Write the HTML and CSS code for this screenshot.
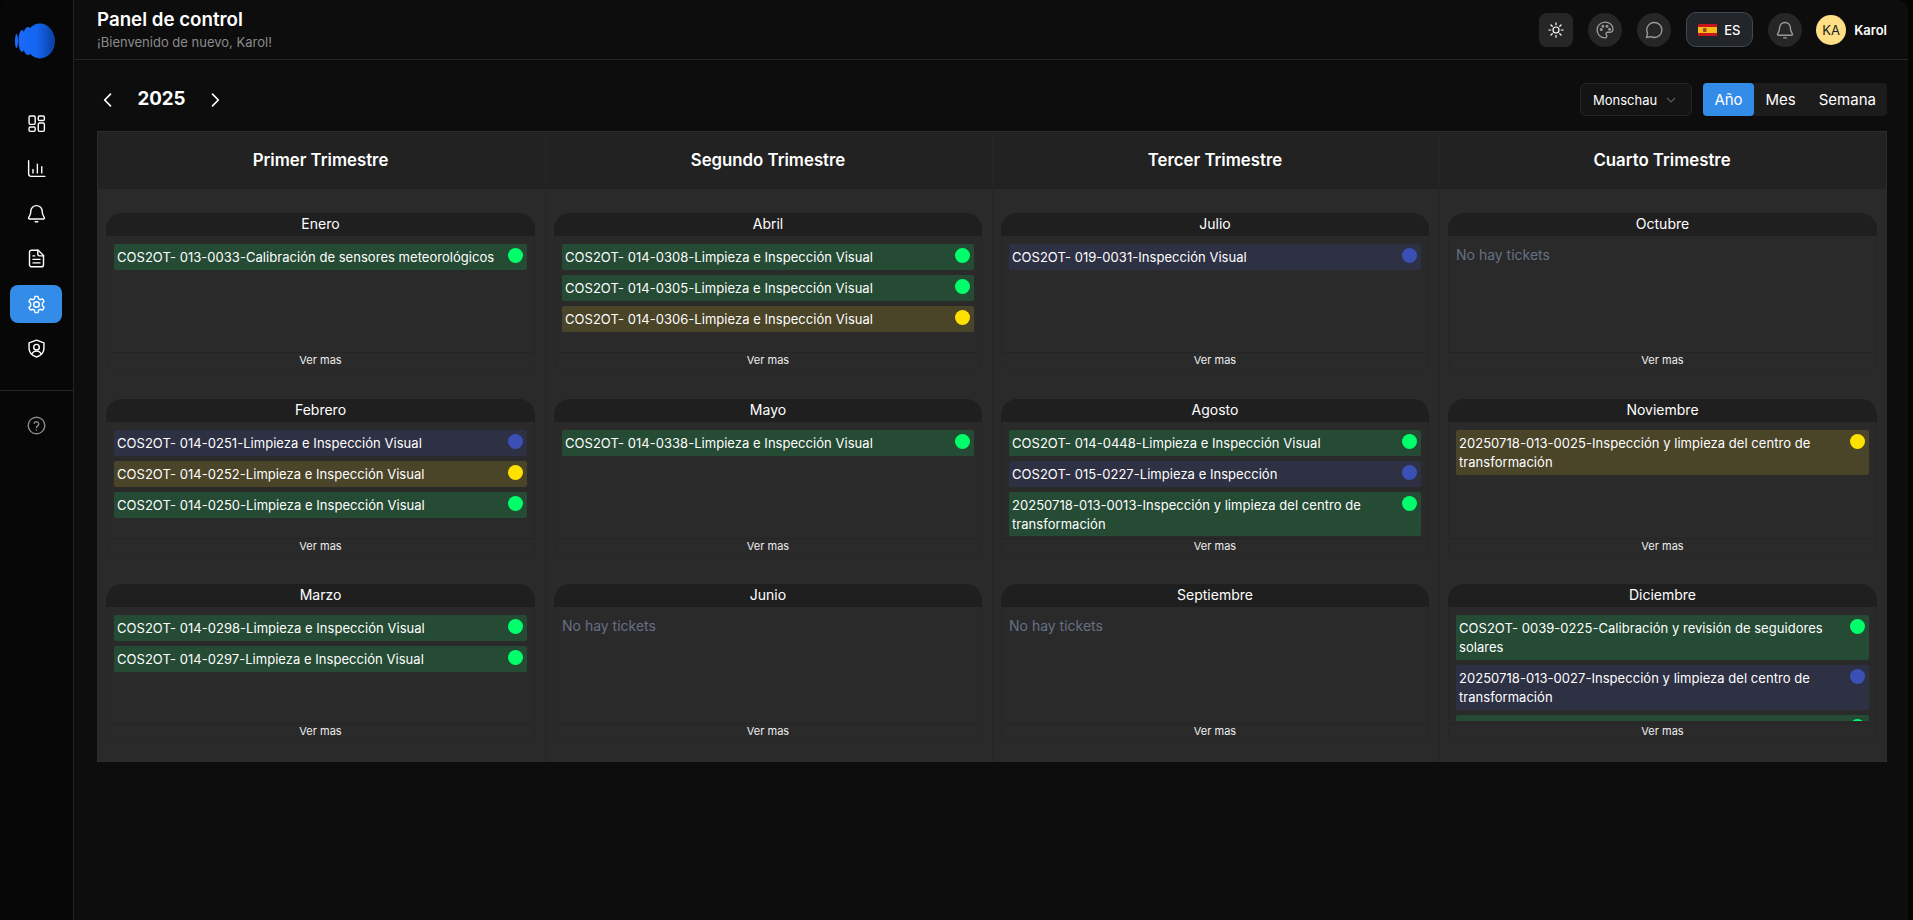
FILE: index.html
```html
<!DOCTYPE html>
<html lang="es">

<head>
    <meta charset="UTF-8">
    <meta name="viewport" content="width=device-width, initial-scale=1.0">
    <title>Panel de control</title>
    <link rel="stylesheet" href="styles.css">
</head>

<body>
    <div class="app">
        <!-- Sidebar -->
        <aside class="sidebar">
            <div class="logo">
                <svg width="41" height="36" viewBox="0 0 41 36">
                    <defs>
                        <linearGradient id="logoFill" gradientUnits="userSpaceOnUse" x1="0" x2="40" y1="0" y2="0">
                            <stop offset="0" stop-color="#1a6bff" />
                            <stop offset="0.55" stop-color="#1565f0" />
                            <stop offset="1" stop-color="#0b3f9e" />
                        </linearGradient>
                    </defs>
                    <ellipse cx="1.5" cy="18" rx="1.5" ry="7" fill="url(#logoFill)" />
                    <ellipse cx="7" cy="18" rx="3.5" ry="11" fill="url(#logoFill)" />
                    <ellipse cx="13" cy="18" rx="5.5" ry="14" fill="url(#logoFill)" />
                    <ellipse cx="25" cy="18" rx="15" ry="17.5" fill="url(#logoFill)" />
                </svg>
            </div>
            <nav class="nav">
                <a href="#" class="nav-item">
                    <svg class="icon" viewBox="0 0 24 24"><rect x="3.5" y="3.5" width="7" height="9.5" rx="1.5" /><rect x="14" y="3.5" width="7" height="5" rx="1.5" /><rect x="3.5" y="16" width="7" height="5" rx="1.5" /><rect x="14" y="11.5" width="7" height="9.5" rx="1.5" /></svg>
                </a>
                <a href="#" class="nav-item">
                    <svg class="icon" viewBox="0 0 24 24"><path d="M3 3v15a3 3 0 0 0 3 3h15.5" /><path d="M8 17v-4M13 17V7M18 17v-7" /></svg>
                </a>
                <a href="#" class="nav-item">
                    <svg class="icon" viewBox="0 0 24 24"><path d="M12 3a6.5 6.5 0 0 0-6.5 6.5c0 4.5-2 6-2.5 7.5-.2.7.3 1.3 1 1.3h16c.7 0 1.2-.6 1-1.3-.5-1.500-2.500-3-2.500-7.500A6.500 6.500 0 0 0 12 3z" /><path d="M10.500 21.500h3" /></svg>
                </a>
                <a href="#" class="nav-item">
                    <svg class="icon" viewBox="0 0 24 24"><path d="M6 2.5h8l6 6V19a2.5 2.5 0 0 1-2.5 2.5h-11A2.5 2.5 0 0 1 4 19V4.5a2 2 0 0 1 2-2z" /><path d="M13.5 2.5V7a2 2 0 0 0 2 2H20" /><path d="M8 9h2M8 13h8M8 17h8" /></svg>
                </a>
                <a href="#" class="nav-item active">
                    <svg class="icon" viewBox="0 0 24 24"><circle cx="12" cy="12" r="3.2" /><path d="M10.3 2.7h3.4l.7 2.8 1.8 1 2.8-.8 1.7 3-2 2v2.600l2 2-1.700 3-2.800-.8-1.800 1-.7 2.800h-3.400l-.7-2.800-1.800-1-2.800.8-1.700-3 2-2v-2.600l-2-2 1.700-3 2.800.8 1.800-1z" /></svg>
                </a>
                <a href="#" class="nav-item">
                    <svg class="icon" viewBox="0 0 24 24"><path d="M12 2.5l8.5 3V12c0 5-3.500 8-8.500 9.700C7 20 3.500 17 3.500 12V5.500z" /><circle cx="12" cy="10.500" r="3.2" /><path d="M6.800 18c1-2 3-3 5.200-3s4.200 1 5.200 3" /></svg>
                </a>
            </nav>
            <div class="sidebar-bottom">
                <a href="#" class="nav-item muted">
                    <svg class="icon" viewBox="0 0 24 24"><circle cx="12" cy="12" r="9.5" /><path d="M9.3 9.5a2.800 2.800 0 0 1 5.400.8c0 1.900-2.700 2.300-2.700 4" /><path d="M12 17.200v.1" /></svg>
                </a>
            </div>
        </aside>

        <main class="main">
            <!-- Top bar -->
            <header class="topbar">
                <div>
                    <h1 class="page-title">Panel de control</h1>
                    <p class="page-subtitle">¡Bienvenido de nuevo, Karol!</p>
                </div>
                <div class="top-actions">
                    <button class="top-btn square">
                        <svg class="icon-sun" viewBox="0 0 24 24"><circle cx="12" cy="12" r="4" /><path d="M12 2.5V5M12 19v2.500M2.500 12H5M19 12h2.500M5.300 5.300L7 7M17 17l1.700 1.700M5.300 18.700L7 17M17 7l1.700-1.700" /></svg>
                    </button>
                    <button class="top-btn">
                        <svg class="icon-sm" viewBox="0 0 24 24"><path d="M12 2.5a9.5 9.5 0 0 0 0 19c1.500 0 2.200-1 2.200-2 0-1.400-1-1.800-1-3 0-1 .8-1.800 2-1.800h2.300c2.300 0 4-1.700 4-4C21.500 6 17.300 2.500 12 2.500z" /><circle cx="7.5" cy="11.5" r="1" /><circle cx="9.5" cy="7.5" r="1" /><circle cx="14.5" cy="7.5" r="1" /><circle cx="17.5" cy="11" r="1" /></svg>
                    </button>
                    <button class="top-btn">
                        <svg class="icon-sm" viewBox="0 0 24 24"><path d="M12.5 3a9 9 0 0 1 0 18c-1.500 0-3-.4-4.200-1L3 21l1.300-5A9 9 0 0 1 12.500 3z" /></svg>
                    </button>
                    <button class="lang-btn">
                        <svg class="flag" viewBox="0 0 19 12"><rect width="19" height="12" fill="#c8161e" /><rect y="3" width="19" height="6" fill="#f6bd18" /><rect x="5" y="4" width="3.5" height="4" rx="1" fill="#9c4a1c" /></svg>
                        <span>ES</span>
                    </button>
                    <button class="top-btn">
                        <svg class="icon-sm" viewBox="0 0 24 24"><path d="M12 3a6.5 6.5 0 0 0-6.5 6.5c0 4.500-2 6-2.500 7.500-.2.7.3 1.300 1 1.300h16c.7 0 1.200-.6 1-1.300-.5-1.500-2.500-3-2.500-7.500A6.500 6.500 0 0 0 12 3z" /><path d="M10.500 21.500h3" /></svg>
                    </button>
                    <div class="user">
                        <span class="avatar">KA</span>
                        <span class="user-name">Karol</span>
                    </div>
                </div>
            </header>

            <div class="content">
                <!-- Year and view controls -->
                <div class="toolbar">
                    <div class="year-nav">
                        <svg class="chevron" viewBox="0 0 24 24"><path d="M15 5l-7 7 7 7" /></svg>
                        <span class="year">2025</span>
                        <svg class="chevron" viewBox="0 0 24 24"><path d="M9 5l7 7-7 7" /></svg>
                    </div>
                    <div class="view-controls">
                        <div class="select">
                            <span>Monschau</span>
                            <svg class="select-arrow" viewBox="0 0 12 12"><path d="M2 4l4 4 4-4" /></svg>
                        </div>
                        <div class="segments">
                            <button class="segment active">Año</button>
                            <button class="segment">Mes</button>
                            <button class="segment">Semana</button>
                        </div>
                    </div>
                </div>

                <!-- Calendar -->
                <div class="calendar">
                    <div class="quarter">
                        <h2 class="quarter-title">Primer Trimestre</h2>
                        <div class="months">
                            <section class="month">
                                <h3 class="month-title">Enero</h3>
                                <div class="tickets">
                                    <div class="ticket green"><span>COS2OT- 013-0033-Calibración de sensores meteorológicos</span><i class="dot"></i></div>
                                </div>
                                <a href="#" class="more">Ver mas</a>
                            </section>
                            <section class="month">
                                <h3 class="month-title">Febrero</h3>
                                <div class="tickets">
                                    <div class="ticket blue"><span>COS2OT- 014-0251-Limpieza e Inspección Visual</span><i class="dot"></i></div>
                                    <div class="ticket yellow"><span>COS2OT- 014-0252-Limpieza e Inspección Visual</span><i class="dot"></i></div>
                                    <div class="ticket green"><span>COS2OT- 014-0250-Limpieza e Inspección Visual</span><i class="dot"></i></div>
                                </div>
                                <a href="#" class="more">Ver mas</a>
                            </section>
                            <section class="month">
                                <h3 class="month-title">Marzo</h3>
                                <div class="tickets">
                                    <div class="ticket green"><span>COS2OT- 014-0298-Limpieza e Inspección Visual</span><i class="dot"></i></div>
                                    <div class="ticket green"><span>COS2OT- 014-0297-Limpieza e Inspección Visual</span><i class="dot"></i></div>
                                </div>
                                <a href="#" class="more">Ver mas</a>
                            </section>
                        </div>
                    </div>

                    <div class="quarter">
                        <h2 class="quarter-title">Segundo Trimestre</h2>
                        <div class="months">
                            <section class="month">
                                <h3 class="month-title">Abril</h3>
                                <div class="tickets">
                                    <div class="ticket green"><span>COS2OT- 014-0308-Limpieza e Inspección Visual</span><i class="dot"></i></div>
                                    <div class="ticket green"><span>COS2OT- 014-0305-Limpieza e Inspección Visual</span><i class="dot"></i></div>
                                    <div class="ticket yellow"><span>COS2OT- 014-0306-Limpieza e Inspección Visual</span><i class="dot"></i></div>
                                </div>
                                <a href="#" class="more">Ver mas</a>
                            </section>
                            <section class="month">
                                <h3 class="month-title">Mayo</h3>
                                <div class="tickets">
                                    <div class="ticket green"><span>COS2OT- 014-0338-Limpieza e Inspección Visual</span><i class="dot"></i></div>
                                </div>
                                <a href="#" class="more">Ver mas</a>
                            </section>
                            <section class="month">
                                <h3 class="month-title">Junio</h3>
                                <div class="tickets">
                                    <p class="empty">No hay tickets</p>
                                </div>
                                <a href="#" class="more">Ver mas</a>
                            </section>
                        </div>
                    </div>

                    <div class="quarter">
                        <h2 class="quarter-title">Tercer Trimestre</h2>
                        <div class="months">
                            <section class="month">
                                <h3 class="month-title">Julio</h3>
                                <div class="tickets">
                                    <div class="ticket blue"><span>COS2OT- 019-0031-Inspección Visual</span><i class="dot"></i></div>
                                </div>
                                <a href="#" class="more">Ver mas</a>
                            </section>
                            <section class="month">
                                <h3 class="month-title">Agosto</h3>
                                <div class="tickets">
                                    <div class="ticket green"><span>COS2OT- 014-0448-Limpieza e Inspección Visual</span><i class="dot"></i></div>
                                    <div class="ticket blue"><span>COS2OT- 015-0227-Limpieza e Inspección</span><i class="dot"></i></div>
                                    <div class="ticket green"><span>20250718-013-0013-Inspección y limpieza del centro de transformación</span><i class="dot"></i></div>
                                </div>
                                <a href="#" class="more">Ver mas</a>
                            </section>
                            <section class="month">
                                <h3 class="month-title">Septiembre</h3>
                                <div class="tickets">
                                    <p class="empty">No hay tickets</p>
                                </div>
                                <a href="#" class="more">Ver mas</a>
                            </section>
                        </div>
                    </div>

                    <div class="quarter">
                        <h2 class="quarter-title">Cuarto Trimestre</h2>
                        <div class="months">
                            <section class="month">
                                <h3 class="month-title">Octubre</h3>
                                <div class="tickets">
                                    <p class="empty">No hay tickets</p>
                                </div>
                                <a href="#" class="more">Ver mas</a>
                            </section>
                            <section class="month">
                                <h3 class="month-title">Noviembre</h3>
                                <div class="tickets">
                                    <div class="ticket yellow"><span>20250718-013-0025-Inspección y limpieza del centro de transformación</span><i class="dot"></i></div>
                                </div>
                                <a href="#" class="more">Ver mas</a>
                            </section>
                            <section class="month">
                                <h3 class="month-title">Diciembre</h3>
                                <div class="tickets">
                                    <div class="ticket green"><span>COS2OT- 0039-0225-Calibración y revisión de seguidores solares</span><i class="dot"></i></div>
                                    <div class="ticket blue"><span>20250718-013-0027-Inspección y limpieza del centro de transformación</span><i class="dot"></i></div>
                                    <!-- Cut off by the scroll area -->
                                    <div class="ticket green clipped"><i class="dot"></i></div>
                                </div>
                                <a href="#" class="more">Ver mas</a>
                            </section>
                        </div>
                    </div>
                </div>
            </div>
        </main>
    </div>
</body>

</html>
```

FILE: styles.css
```css
* {
    box-sizing: border-box;
}

body {
    font-family: Inter, "Noto Sans", sans-serif;
    margin: 0;
    padding: 0;
    background-color: #050505;
    color: #fff;
}

.app {
    display: flex;
    height: 920px;
    overflow: hidden;
    padding-right: 5px;
}

/* Sidebar */
.sidebar {
    width: 74px;
    flex-shrink: 0;
    background-color: #070707;
    border-right: 1px solid #222;
    border-top-left-radius: 10px;
}

.logo {
    height: 59px;
    padding: 23px 0 0 15px;
    margin-bottom: 26px;
}

.logo svg {
    display: block;
}

.nav {
    display: flex;
    flex-direction: column;
    gap: 7px;
    height: 305px;
    padding: 19px 11px 0 10px;
}

.nav-item {
    display: flex;
    align-items: center;
    justify-content: center;
    height: 38px;
    border-radius: 8px;
    color: #fff;
}

.nav-item.active {
    margin: 1px 0 -1px;
    background-color: #338ce8;
}

.nav-item.muted {
    color: #8a8a8a;
}

.icon {
    width: 21px;
    height: 21px;
    fill: none;
    stroke: currentColor;
    stroke-width: 1.6;
    stroke-linecap: round;
    stroke-linejoin: round;
}

.sidebar-bottom {
    border-top: 1px solid #262626;
    padding: 15px 11px 0 10px;
}

/* Main */
.main {
    flex: 1;
    min-width: 0;
    background-color: #0d0d0d;
    border-top-right-radius: 10px;
}

.topbar {
    display: flex;
    justify-content: space-between;
    align-items: center;
    height: 60px;
    padding: 0 21px 0 23px;
    border-bottom: 1px solid #262626;
}

.page-title {
    margin: 0;
    font-size: 18.72px;
    line-height: 22px;
    font-weight: 600;
}

.page-subtitle {
    margin: 2px 0 0;
    font-size: 13px;
    line-height: 18px;
    color: #8b8b8b;
}

.top-actions {
    display: flex;
    align-items: center;
    gap: 15px;
}

.top-btn {
    display: flex;
    align-items: center;
    justify-content: center;
    width: 34px;
    height: 34px;
    padding: 0;
    border: none;
    border-radius: 50%;
    background-color: #262626;
    color: #9a9a9a;
}

.top-btn.square {
    border-radius: 8px;
}

.icon-sm,
.icon-sun {
    width: 20px;
    height: 20px;
    fill: none;
    stroke: currentColor;
    stroke-width: 1.6;
    stroke-linecap: round;
    stroke-linejoin: round;
}

.icon-sun {
    width: 18px;
    height: 18px;
    color: #fff;
}

.lang-btn {
    display: flex;
    align-items: center;
    gap: 7px;
    width: 67px;
    height: 35px;
    padding: 0 11px;
    border: 1px solid #3f4856;
    border-radius: 10px;
    background-color: #22252a;
    color: #fff;
    font-family: inherit;
    font-size: 13px;
    font-weight: 500;
}

.flag {
    width: 19px;
    height: 12px;
    flex-shrink: 0;
}

.user {
    display: flex;
    align-items: center;
    gap: 8px;
    margin-left: -1px;
}

.avatar {
    display: flex;
    align-items: center;
    justify-content: center;
    width: 30px;
    height: 30px;
    border-radius: 50%;
    background-color: #ffdf85;
    color: #222;
    font-size: 13px;
}

.user-name {
    font-size: 13px;
    font-weight: 600;
}

/* Toolbar */
.content {
    padding: 23px 21px 0 23px;
}

.toolbar {
    display: flex;
    justify-content: space-between;
    align-items: center;
    height: 33px;
    margin-bottom: 15px;
}

.year-nav {
    display: flex;
    align-items: center;
    gap: 13px;
    padding-left: 1px;
}

.chevron {
    width: 20px;
    height: 20px;
    fill: none;
    stroke: #fff;
    stroke-width: 2;
    stroke-linecap: round;
    stroke-linejoin: round;
}

.year {
    width: 61px;
    margin-bottom: 2px;
    text-align: center;
    font-size: 18.72px;
    font-weight: 700;
}

.view-controls {
    display: flex;
    gap: 11px;
}

.select {
    display: flex;
    align-items: center;
    justify-content: space-between;
    width: 112px;
    height: 33px;
    padding: 0 14px 0 12px;
    border: 1px solid #262626;
    border-radius: 6px;
    background-color: #141414;
    font-size: 13px;
}

.select-arrow {
    width: 12px;
    height: 12px;
    fill: none;
    stroke: #5c5c5c;
    stroke-width: 1.2;
}

.segments {
    display: flex;
    width: 184px;
    height: 33px;
    border-radius: 4px;
    background-color: #1c1c1c;
}

.segment {
    padding: 0 11.5px;
    border: none;
    border-radius: 4px;
    background: none;
    color: #fff;
    font-family: inherit;
    font-size: 15px;
    white-space: nowrap;
}

.segment.active {
    flex: none;
    width: 51px;
    padding: 0;
    background-color: #338ce8;
}

/* Calendar */
.calendar {
    display: grid;
    grid-template-columns: repeat(4, 1fr);
    border: 1px solid #2c2c2c;
    background-color: #2a2a2a;
}

.quarter {
    border-left: 1px solid #262626;
    min-width: 0;
}

.quarter:first-child {
    border-left: none;
}

.quarter-title {
    display: flex;
    align-items: center;
    justify-content: center;
    height: 57px;
    padding: 0 2px 2px 0;
    margin: 0;
    background-color: #222;
    font-size: 16.8px;
    font-weight: 600;
}

.months {
    display: flex;
    flex-direction: column;
    gap: 26.5px;
    padding: 24px 10px 18px 8px;
}

.quarter:last-child .months {
    padding-right: 9px;
}

.month {
    display: flex;
    flex-direction: column;
    height: 159px;
}

.month-title {
    height: 23px;
    margin: 0;
    border-radius: 16px 16px 0 0;
    background-color: #1f1f1f;
    text-align: center;
    font-size: 14px;
    line-height: 21px;
    font-weight: 400;
}

/* the list clips 2px above its bottom line */
.tickets {
    display: flex;
    flex-direction: column;
    gap: 5px;
    height: 116px;
    padding: 8px 7px 0;
    overflow: hidden;
    border: 1px solid #262626;
    border-top: none;
    border-bottom: 2px solid #2a2a2a;
    box-shadow: 0 1px 0 #252525;
}

.ticket {
    display: flex;
    justify-content: space-between;
    align-items: flex-start;
    gap: 8px;
    flex-shrink: 0;
    padding: 4px 4px 3px 3px;
    border-radius: 2px;
    font-size: 13px;
    letter-spacing: 0.04px;
    line-height: 19px;
}

.ticket.clipped {
    height: 26px;
    justify-content: flex-end;
}

.ticket.green {
    background-color: #254b35;
}

.ticket.blue {
    background-color: #2e3044;
}

.ticket.yellow {
    background-color: #4a4428;
}

.dot {
    width: 15px;
    height: 15px;
    flex-shrink: 0;
    border-radius: 50%;
}

.green .dot {
    background-color: #00ff6a;
}

.blue .dot {
    background-color: #3b50b5;
}

.yellow .dot {
    background-color: #ffe100;
}

.empty {
    margin: 1px 0 0;
    color: #667085;
    font-size: 14px;
    line-height: 20px;
}

.more {
    display: block;
    height: 20px;
    border: 1px solid #272727;
    border-top: none;
    border-radius: 0 0 12px 12px;
    color: #eee;
    text-align: center;
    text-decoration: none;
    font-size: 11px;
    line-height: 17px;
}
```
